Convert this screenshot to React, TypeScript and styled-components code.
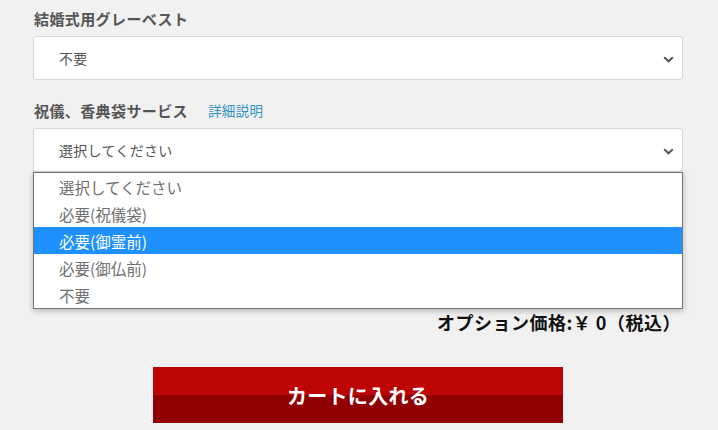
import React from "react";
import styled, { createGlobalStyle } from "styled-components";

const Global = createGlobalStyle`
  html, body { margin: 0; padding: 0; background: #f1f1f1; }
  body { font-family: "Noto Sans CJK JP", "Noto Sans", sans-serif; }
`;

const Page = styled.div`
  width: 718px;
  height: 430px;
  overflow: hidden;
  background: #f1f1f1;
`;

const Form = styled.div`
  width: 650px;
  margin-left: 33px;
  display: flex;
  flex-direction: column;
`;

const Field = styled.div<{ $top: number }>`
  display: flex;
  flex-direction: column;
  gap: 7px;
  margin-top: ${(p) => p.$top}px;
`;

const LabelRow = styled.div`
  display: flex;
  align-items: center;
  gap: 20px;
  height: 22px;
  padding-left: 1px;
`;

const Label = styled.span`
  font-size: 15px;
  font-weight: 700;
  color: #555;
  letter-spacing: 0.4px;
`;

const HelpLink = styled.a`
  font-size: 13.5px;
  color: #2f93c4;
  text-decoration: none;
  letter-spacing: 0.3px;
`;

const SelectWrap = styled.div`
  position: relative;
`;

const SelectBox = styled.div`
  box-sizing: border-box;
  height: 44px;
  background: #fff;
  border: 1px solid #d6d6d6;
  border-radius: 3px;
  display: flex;
  align-items: center;
  justify-content: space-between;
  padding: 0 8px 0 25px;
  font-size: 14px;
  letter-spacing: 0.3px;
  color: #555;
`;

const Chevron = styled.svg`
  width: 11px;
  height: 7px;
  margin-top: 2px;
`;

const List = styled.ul`
  position: absolute;
  top: 100%;
  left: 0;
  right: 0;
  margin: 0;
  padding: 0;
  list-style: none;
  background: #fff;
  border: 1px solid #767676;
  box-shadow: 0 2px 6px rgba(0, 0, 0, 0.25);
  z-index: 5;
`;

const Item = styled.li<{ $active?: boolean }>`
  height: 27px;
  display: flex;
  align-items: center;
  padding-left: 25px;
  font-size: 15.5px;
  color: ${(p) => (p.$active ? "#fff" : "#707070")};
  background: ${(p) => (p.$active ? "#1e90ff" : "#fff")};
`;

const PriceRow = styled.div`
  margin-top: 137px;
  height: 26px;
  display: flex;
  justify-content: flex-end;
  align-items: center;
  padding-right: 2px;
  font-size: 18px;
  font-weight: 700;
  letter-spacing: 0.5px;
  color: #111;
`;

const CartButton = styled.button`
  align-self: center;
  margin-top: 32px;
  width: 410px;
  height: 56px;
  border: none;
  padding: 0;
  background: linear-gradient(#bd0505 0, #bd0505 50%, #900000 50%, #900000 100%);
  color: #fff;
  font-family: inherit;
  font-size: 20px;
  font-weight: 700;
  letter-spacing: 0.3px;
  cursor: pointer;
`;

const ChevronIcon = () => (
  <Chevron viewBox="0 0 11 7">
    <path d="M1.2 1.2 L5.5 5.3 L9.8 1.2" fill="none" stroke="#555" strokeWidth="2" />
  </Chevron>
);

const options = ["選択してください", "必要(祝儀袋)", "必要(御霊前)", "必要(御仏前)", "不要"];

export default function App() {
  return (
    <Page>
      <Global />
      <Form>
        <Field $top={7}>
          <LabelRow>
            <Label>結婚式用グレーベスト</Label>
          </LabelRow>
          <SelectBox>
            <span>不要</span>
            <ChevronIcon />
          </SelectBox>
        </Field>
        <Field $top={19}>
          <LabelRow>
            <Label>祝儀、香典袋サービス</Label>
            <HelpLink href="#">詳細説明</HelpLink>
          </LabelRow>
          <SelectWrap>
            <SelectBox>
              <span>選択してください</span>
              <ChevronIcon />
            </SelectBox>
            <List>
              {options.map((o, i) => (
                <Item key={o} $active={i === 2}>
                  {o}
                </Item>
              ))}
            </List>
          </SelectWrap>
        </Field>
        <PriceRow>オプション価格:￥ 0（税込）</PriceRow>
        <CartButton>カートに入れる</CartButton>
      </Form>
    </Page>
  );
}
